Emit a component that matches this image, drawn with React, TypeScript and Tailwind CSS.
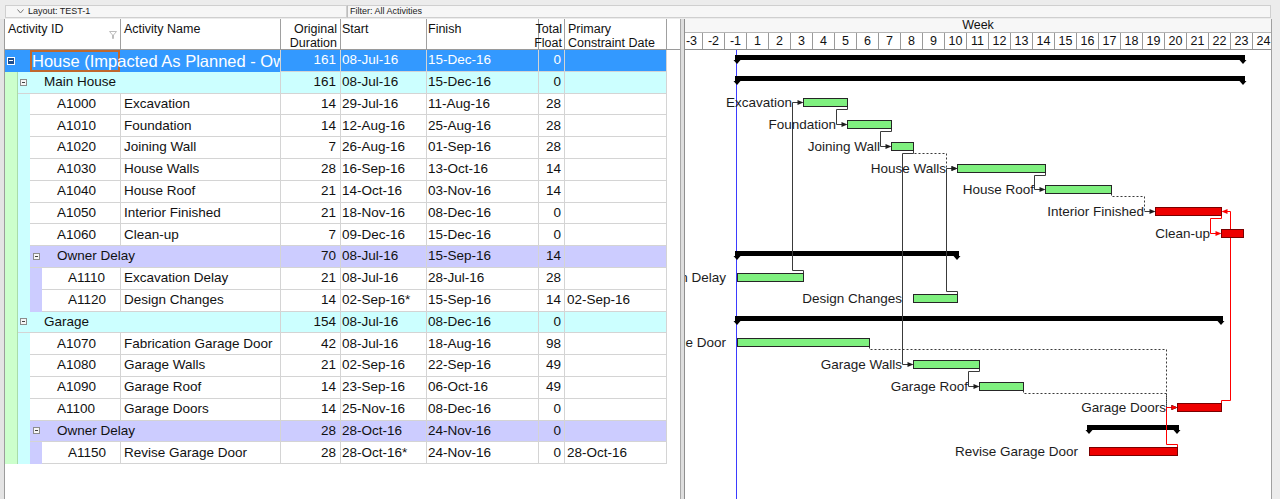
type Kind = 'wbs0' | 'wbs1' | 'wbs2' | 'task1' | 'task2';

interface Row {
  kind: Kind;
  id?: string;
  name: string;
  dur: number;
  start: string;
  finish: string;
  tf: number;
  pcd?: string;
}

const rows: Row[] = [
  { kind: 'wbs0', name: 'House (Impacted As Planned - Owner Delay)', dur: 161, start: '08-Jul-16', finish: '15-Dec-16', tf: 0 },
  { kind: 'wbs1', name: 'Main House', dur: 161, start: '08-Jul-16', finish: '15-Dec-16', tf: 0 },
  { kind: 'task1', id: 'A1000', name: 'Excavation', dur: 14, start: '29-Jul-16', finish: '11-Aug-16', tf: 28 },
  { kind: 'task1', id: 'A1010', name: 'Foundation', dur: 14, start: '12-Aug-16', finish: '25-Aug-16', tf: 28 },
  { kind: 'task1', id: 'A1020', name: 'Joining Wall', dur: 7, start: '26-Aug-16', finish: '01-Sep-16', tf: 28 },
  { kind: 'task1', id: 'A1030', name: 'House Walls', dur: 28, start: '16-Sep-16', finish: '13-Oct-16', tf: 14 },
  { kind: 'task1', id: 'A1040', name: 'House Roof', dur: 21, start: '14-Oct-16', finish: '03-Nov-16', tf: 14 },
  { kind: 'task1', id: 'A1050', name: 'Interior Finished', dur: 21, start: '18-Nov-16', finish: '08-Dec-16', tf: 0 },
  { kind: 'task1', id: 'A1060', name: 'Clean-up', dur: 7, start: '09-Dec-16', finish: '15-Dec-16', tf: 0 },
  { kind: 'wbs2', name: 'Owner Delay', dur: 70, start: '08-Jul-16', finish: '15-Sep-16', tf: 14 },
  { kind: 'task2', id: 'A1110', name: 'Excavation Delay', dur: 21, start: '08-Jul-16', finish: '28-Jul-16', tf: 28 },
  { kind: 'task2', id: 'A1120', name: 'Design Changes', dur: 14, start: '02-Sep-16*', finish: '15-Sep-16', tf: 14, pcd: '02-Sep-16' },
  { kind: 'wbs1', name: 'Garage', dur: 154, start: '08-Jul-16', finish: '08-Dec-16', tf: 0 },
  { kind: 'task1', id: 'A1070', name: 'Fabrication Garage Door', dur: 42, start: '08-Jul-16', finish: '18-Aug-16', tf: 98 },
  { kind: 'task1', id: 'A1080', name: 'Garage Walls', dur: 21, start: '02-Sep-16', finish: '22-Sep-16', tf: 49 },
  { kind: 'task1', id: 'A1090', name: 'Garage Roof', dur: 14, start: '23-Sep-16', finish: '06-Oct-16', tf: 49 },
  { kind: 'task1', id: 'A1100', name: 'Garage Doors', dur: 14, start: '25-Nov-16', finish: '08-Dec-16', tf: 0 },
  { kind: 'wbs2', name: 'Owner Delay', dur: 28, start: '28-Oct-16', finish: '24-Nov-16', tf: 0 },
  { kind: 'task2', id: 'A1150', name: 'Revise Garage Door', dur: 28, start: '28-Oct-16*', finish: '24-Nov-16', tf: 0, pcd: '28-Oct-16' },
];

// pred row, succ row, style (s = driving, d = non-driving, r = critical)
const rels: [number, number, 's' | 'd' | 'r'][] = [
  [10, 2, 's'],
  [2, 3, 's'],
  [3, 4, 's'],
  [4, 5, 'd'],
  [4, 14, 's'],
  [11, 5, 's'],
  [5, 6, 's'],
  [6, 7, 'd'],
  [13, 16, 'd'],
  [14, 15, 's'],
  [15, 16, 'd'],
  [7, 8, 'r'],
  [18, 16, 'r'],
];

const MONTHS: Record<string, number> = { Jul: 6, Aug: 7, Sep: 8, Oct: 9, Nov: 10, Dec: 11 };
const X0 = 724; // Mon 04-Jul-16
const DAY = 22 / 7;
const RH = 21.8;

function dayOff(s: string) {
  const [d, m] = s.replace('*', '').split('-');
  return (Date.UTC(2016, MONTHS[m], Number(d)) - Date.UTC(2016, 6, 4)) / 864e5;
}
const xStart = (s: string) => X0 + dayOff(s) * DAY;
const xEnd = (s: string) => X0 + (dayOff(s) + 1) * DAY;
const rowTop = (i: number) => 50 + i * RH;
const sn = (v: number) => Math.round(v) + 0.5;
const bt = (i: number) => Math.round(rowTop(i) + 4.5) + 0.5;
const bb = (i: number) => bt(i) + 8;
const cyy = (i: number) => bt(i) + 4;

function Toggle({ selected }: { selected?: boolean }) {
  if (selected) {
    return (
      <span className="flex h-[8px] w-[8px] items-center justify-center border border-white bg-[#1f4f8f]">
        <span className="h-px w-[4px] bg-white" />
      </span>
    );
  }
  return (
    <span className="flex h-[7px] w-[7px] items-center justify-center border border-[#8c8c8c] bg-[#f6f6f6]">
      <span className="h-px w-[3px] bg-[#404040]" />
    </span>
  );
}

function Green() {
  return <div className="h-full w-[13px] shrink-0 border-r border-[#a9dca9] bg-[#ccffcc]" />;
}
function Cyan() {
  return <div className="h-full w-[12px] shrink-0 bg-[#ccffff]" />;
}
function Lav() {
  return <div className="h-full w-[12px] shrink-0 bg-[#ccccff]" />;
}

function DataCells({ r }: { r: Row }) {
  return (
    <>
      <div className="flex w-[60px] shrink-0 items-center justify-end border-b border-l border-[#d4d4d4] pr-[4px]">{r.dur}</div>
      <div className="flex w-[86px] shrink-0 items-center border-b border-l border-[#d4d4d4] pl-[1px]">{r.start}</div>
      <div className="flex w-[112px] shrink-0 items-center border-b border-l border-[#d4d4d4] pl-[1px]">{r.finish}</div>
      <div className="flex w-[26px] shrink-0 items-center justify-end border-b border-l border-[#d4d4d4] pr-[3px]">{r.tf}</div>
      <div className="flex w-[103px] shrink-0 items-center border-b border-l border-r border-[#d4d4d4] pl-[2px]">{r.pcd}</div>
    </>
  );
}

function TableRow({ r }: { r: Row }) {
  if (r.kind === 'wbs0') {
    return (
      <div className="flex h-[21.8px] w-[662px] bg-[#3399ff] text-white">
        <div className="flex w-[275px] shrink-0 overflow-hidden">
          <div className="flex w-[25px] shrink-0 items-center pl-[2px]">
            <Toggle selected />
          </div>
          <div className="flex h-full w-[90px] shrink-0 items-center whitespace-nowrap border-2 border-[#c0682e] text-[16.5px]">
            {r.name}
          </div>
        </div>
        <DataCells r={r} />
      </div>
    );
  }
  if (r.kind === 'wbs1') {
    return (
      <div className="flex h-[21.8px] w-[662px]">
        <Green />
        <div className="flex flex-1 bg-[#ccffff]">
          <div className="flex w-[262px] shrink-0 items-center border-b border-[#d4d4d4]">
            <div className="flex w-[26px] shrink-0 items-center pl-[2px]">
              <Toggle />
            </div>
            <span className="whitespace-nowrap">{r.name}</span>
          </div>
          <DataCells r={r} />
        </div>
      </div>
    );
  }
  if (r.kind === 'wbs2') {
    return (
      <div className="flex h-[21.8px] w-[662px]">
        <Green />
        <Cyan />
        <div className="flex flex-1 bg-[#ccccff]">
          <div className="flex w-[250px] shrink-0 items-center border-b border-[#d4d4d4]">
            <div className="flex w-[27px] shrink-0 items-center pl-[3px]">
              <Toggle />
            </div>
            <span className="whitespace-nowrap">{r.name}</span>
          </div>
          <DataCells r={r} />
        </div>
      </div>
    );
  }
  return (
    <div className="flex h-[21.8px] w-[662px] bg-white">
      <Green />
      <Cyan />
      {r.kind === 'task2' && <Lav />}
      {r.kind === 'task2' ? (
        <div className="flex w-[78px] shrink-0 items-center border-b border-[#d4d4d4] pl-[26px]">{r.id}</div>
      ) : (
        <div className="flex w-[90px] shrink-0 items-center border-b border-[#d4d4d4] pl-[27px]">{r.id}</div>
      )}
      <div className="flex w-[160px] shrink-0 items-center overflow-hidden whitespace-nowrap border-b border-l border-[#d4d4d4] pl-[3px]">
        {r.name}
      </div>
      <DataCells r={r} />
    </div>
  );
}

function TableHeader() {
  return (
    <div className="flex h-[31px] border-b border-[#9a9a9a] text-[12.5px] leading-[14px]">
      <div className="flex w-[115px] shrink-0 pl-[3px] pt-[3px]">
        <span>Activity ID</span>
        <svg width="8" height="8" viewBox="0 0 8 8" className="ml-auto mr-[3px] mt-[9px]">
          <polygon points="0.5,0.5 7.5,0.5 4.5,4 4.5,7.5 3.5,7.5 3.5,4" fill="none" stroke="#bdbdbd" />
        </svg>
      </div>
      <div className="w-[160px] shrink-0 border-l border-[#a0a0a0] pl-[3px] pt-[3px]">Activity Name</div>
      <div className="flex w-[60px] shrink-0 flex-col items-end border-l border-[#a0a0a0] pr-[3px] pt-[3px]">
        <span>Original</span>
        <span>Duration</span>
      </div>
      <div className="w-[86px] shrink-0 border-l border-[#a0a0a0] pl-[1px] pt-[3px]">Start</div>
      <div className="w-[112px] shrink-0 border-l border-[#a0a0a0] pl-[1px] pt-[3px]">Finish</div>
      <div className="flex w-[26px] shrink-0 flex-col items-end whitespace-nowrap border-l border-[#a0a0a0] pr-[2px] pt-[3px]">
        <span>Total</span>
        <span>Float</span>
      </div>
      <div className="flex w-[103px] shrink-0 flex-col whitespace-nowrap border-l border-r border-[#a0a0a0] pl-[3px] pt-[3px]">
        <span>Primary</span>
        <span>Constraint Date</span>
      </div>
    </div>
  );
}

function TopBar() {
  return (
    <div className="flex h-[19px] items-end bg-[#ececec] pb-[1px] pl-[5px] text-[9px] text-[#222]">
      <div className="flex h-[13px] w-[342px] shrink-0 items-center border border-[#cfcfcf] bg-[#f6f6f6] pl-[11px]">
        <svg width="7" height="5" viewBox="0 0 7 5" className="mr-[4px]">
          <polyline points="0.5,0.5 3.5,4 6.5,0.5" fill="none" stroke="#777" />
        </svg>
        <span>Layout: TEST-1</span>
      </div>
      <div className="flex h-[13px] w-[924px] shrink-0 items-center border border-l-[#bdbdbd] border-[#cfcfcf] bg-[#f6f6f6] pl-[2px]">
        Filter: All Activities
      </div>
    </div>
  );
}

function Timescale() {
  const weeks = [-3, -2, -1, ...Array.from({ length: 24 }, (_, i) => i + 1)];
  return (
    <div className="h-[31px] shrink-0 text-[12.5px]">
      <div className="flex h-[14px] items-center justify-center border-b border-[#b4b4b4] bg-[#f7f7f7] leading-none">
        Week
      </div>
      <div className="h-[17px] overflow-hidden border-b border-[#8f8f8f] bg-white">
        <div className="ml-[-5px] flex h-full">
          {weeks.map((w) => (
            <div key={w} className="flex h-full w-[22px] shrink-0 items-center justify-center border-l border-[#9a9a9a] leading-none">
              {w}
            </div>
          ))}
        </div>
      </div>
    </div>
  );
}

function Arrow({ x, y, color }: { x: number; y: number; color: string }) {
  return <polygon points={`${x - 6},${y - 2.5} ${x},${y} ${x - 6},${y + 2.5}`} fill={color} />;
}

function GanttChart() {
  const links = rels.map(([p, s, k]) => {
    const pe = sn(xEnd(rows[p].finish));
    const ss = sn(xStart(rows[s].start));
    const vx = sn(xStart(rows[s].start) - 10.5);
    const down = s > p;
    const y0 = down ? bb(p) : bt(p);
    const y1 = down ? bb(p) + 3 : bt(p) - 3;
    return { k, d: `M${pe} ${y0}V${y1}H${vx}V${cyy(s)}`, tail: `M${vx} ${cyy(s)}H${ss - 5}`, ss, y: cyy(s) };
  });
  const order = ['d', 's', 'r'];
  const ffA = sn(xEnd(rows[16].finish));
  const ffB = sn(xEnd(rows[7].finish));
  const ffY = cyy(7);

  return (
    <svg width={586} height={449} viewBox="685 50 586 449" className="block" fontFamily="'Liberation Sans', Arial, sans-serif" fontSize={13.5}>
      <line x1={736.5} y1={50} x2={736.5} y2={499} stroke="#3b3bff" />

      {rows.map((r, i) => {
        if (!r.kind.startsWith('wbs')) return null;
        const a = Math.round(xStart(r.start));
        const b = Math.round(xEnd(r.finish));
        const top = Math.round(rowTop(i) + 4.5);
        const y = top + 5;
        return (
          <g key={i} fill="#000">
            <rect x={a - 2} y={top} width={b - a + 4} height={5} />
            <polygon points={`${a - 3.5},${y} ${a + 3.5},${y} ${a},${y + 4}`} />
            <polygon points={`${b - 3.5},${y} ${b + 3.5},${y} ${b},${y + 4}`} />
          </g>
        );
      })}

      {order.map((k) =>
        links
          .filter((l) => l.k === k)
          .map((l, j) => (
            <g key={k + j} fill="none" stroke={k === 'r' ? '#ff0000' : '#3a3a3a'} strokeWidth={1}>
              <path d={l.d} strokeDasharray={k === 'd' ? '2 2' : undefined} />
              <path d={l.tail} />
            </g>
          ))
      )}
      <path d={`M${ffA} ${bt(16)}V${bt(16) - 3}H${ffA + 9}V${ffY}H${ffB + 5}`} fill="none" stroke="#ff0000" />

      {rows.map((r, i) => {
        if (!r.kind.startsWith('task')) return null;
        const a = Math.round(xStart(r.start));
        const b = Math.round(xEnd(r.finish));
        const crit = r.tf === 0;
        return (
          <g key={i}>
            <rect x={a + 0.5} y={bt(i)} width={b - a} height={8} fill={crit ? '#ee0000' : '#7ff07f'} stroke={crit ? '#7a0000' : '#262626'} />
            <text x={a - 11} y={cyy(i) + 4.7} textAnchor="end" fill="#1c1c1c">
              {r.name}
            </text>
          </g>
        );
      })}

      {order.map((k) =>
        links
          .filter((l) => l.k === k)
          .map((l, j) => <Arrow key={'a' + k + j} x={l.ss} y={l.y} color={k === 'r' ? '#ff0000' : '#1e1e1e'} />)
      )}
      <polygon points={`${ffB + 6},${ffY - 2.5} ${ffB},${ffY} ${ffB + 6},${ffY + 2.5}`} fill="#ff0000" />
    </svg>
  );
}

export default function App() {
  return (
    <div className="h-[499px] w-[1280px] overflow-hidden bg-[#ececec] font-['Liberation_Sans',Arial,sans-serif] text-[#111]">
      <TopBar />
      <div className="flex h-[480px]">
        <div className="flex w-[680px] shrink-0">
          <div className="w-[5px] shrink-0 border-r border-[#9c9c9c] bg-[#e4e4e4]" />
          <div className="flex-1 bg-white text-[13.5px]">
            <TableHeader />
            {rows.map((r, i) => (
              <TableRow key={i} r={r} />
            ))}
          </div>
        </div>
        <div className="w-[4px] shrink-0 border-l border-[#a8a8a8] bg-[#dedede]" />
        <div className="flex w-[587px] shrink-0 flex-col border-l border-[#8f8f8f] bg-white">
          <Timescale />
          <GanttChart />
        </div>
        <div className="flex-1 border-l border-[#a0a0a0] bg-[#ececec]" />
      </div>
    </div>
  );
}
